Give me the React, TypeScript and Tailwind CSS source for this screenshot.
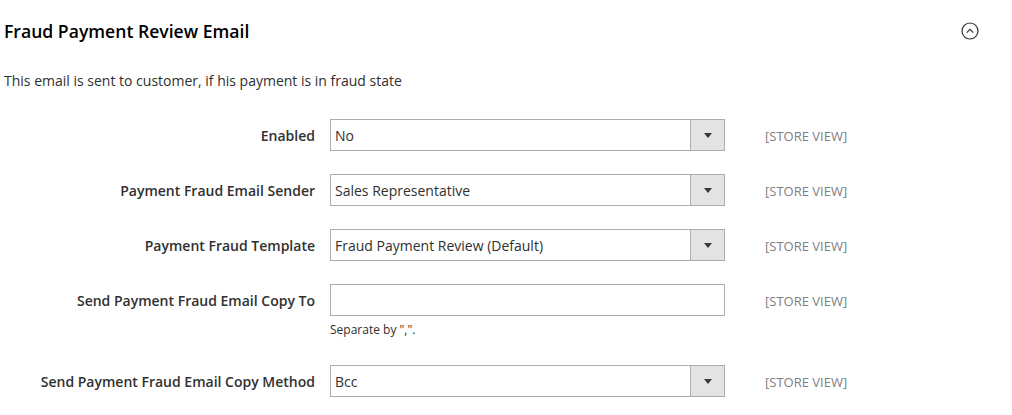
import React from "react";

type Row = { label: string; value?: string; kind: "select" | "text"; note?: boolean };

const ROWS: Row[] = [
  { label: "Enabled", value: "No", kind: "select" },
  { label: "Payment Fraud Email Sender", value: "Sales Representative", kind: "select" },
  { label: "Payment Fraud Template", value: "Fraud Payment Review (Default)", kind: "select" },
  { label: "Send Payment Fraud Email Copy To", kind: "text", note: true },
  { label: "Send Payment Fraud Email Copy Method", value: "Bcc", kind: "select" },
];

function Field({ row }: { row: Row }) {
  if (row.kind === "text") {
    return <div className="h-[32px] w-[395px] border border-[#adadad] bg-white" />;
  }
  return (
    <div className="flex h-[32px] w-[395px] border border-[#adadad] bg-white">
      <div className="flex flex-1 items-center pl-[4px] text-[14px] text-[#303030]">{row.value}</div>
      <div className="flex w-[34px] items-center justify-center border-l border-[#adadad] bg-[#e3e3e3]">
        <svg width="8" height="5" viewBox="0 0 8 5">
          <path d="M0 0h8L4 5z" fill="#41362f" />
        </svg>
      </div>
    </div>
  );
}

export default function App() {
  return (
    <div className="h-[415px] w-[1012px] overflow-hidden bg-white font-['Open_Sans',sans-serif] text-[#303030]">
      <div className="flex h-[62px] items-center justify-between pl-[4px] pr-[33px]">
        <h2 className="text-[17.6px] font-semibold text-[#000]">Fraud Payment Review Email</h2>
        <svg width="18" height="18" viewBox="0 0 18 18">
          <circle cx="9" cy="9" r="8" fill="none" stroke="#303030" strokeWidth="1.2" />
          <path d="M5.8 10.6 9 7.4l3.2 3.2" fill="none" stroke="#303030" strokeWidth="1.2" />
        </svg>
      </div>
      <p className="mt-[9px] pl-[4px] text-[14px] leading-[20px]">
        This email is sent to customer, if his payment is in fraud state
      </p>
      <div className="mt-[28px] flex flex-col">
        {ROWS.map((row) => (
          <div key={row.label} className="mb-[23px]">
            <div className="flex items-center">
              <div className="w-[315px] text-right text-[14px] font-semibold text-[#303030]">
                {row.label}
              </div>
              <div className="ml-[15px]">
                <Field row={row} />
              </div>
              <div className="ml-[40px] pt-[3px] text-[13px] text-[#808080]">[STORE VIEW]</div>
            </div>
            {row.note && (
              <div className="ml-[330px] mt-[4px] h-[22px] text-[12px] leading-[20px] text-[#303030]">
                Separate by ",".
              </div>
            )}
          </div>
        ))}
      </div>
    </div>
  );
}
